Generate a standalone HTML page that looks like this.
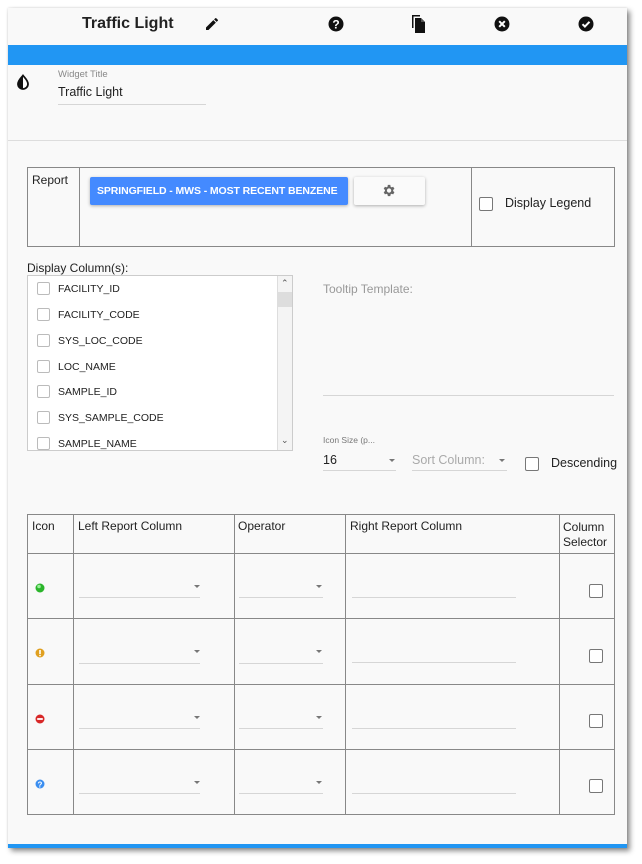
<!DOCTYPE html>
<html><head><meta charset="utf-8"><style>
*{margin:0;padding:0;box-sizing:border-box}
body{width:642px;height:864px;background:#fff;font-family:"Liberation Sans",Arial,sans-serif;position:relative;overflow:hidden;color:#222}
.a{position:absolute}
#panel{left:8px;top:8px;width:619px;height:840px;background:#f9f9f9;box-shadow:3px 3px 5px rgba(0,0,0,.45),0 0 2px rgba(0,0,0,.15)}
.t{position:absolute;white-space:nowrap;line-height:1}
.ul{position:absolute;height:1px;background:#d6d6d6}
.cb{position:absolute;width:14px;height:14px;border:1.5px solid #777;border-radius:2px;background:#fff}
.cbl{position:absolute;width:13px;height:13px;border:1px solid #bbb;border-radius:2px;background:#fff}
.arr{position:absolute;width:0;height:0;border-left:3px solid transparent;border-right:3px solid transparent;border-top:3px solid #777}
.vl{position:absolute;width:1px;background:#888}
.hl{position:absolute;height:1px;background:#888}
</style></head><body>
<div id="panel" class="a"></div>
<div class="t" style="left:82px;top:16px;font-size:16px;font-weight:bold;color:#222">Traffic Light</div>
<svg class="a" style="left:204px;top:16px" width="16" height="16" viewBox="0 0 24 24"><path d="M3 17.25V21h3.75L17.81 9.94l-3.75-3.75L3 17.25zM20.71 7.04a1 1 0 000-1.41l-2.34-2.34a1 1 0 00-1.41 0l-1.83 1.83 3.75 3.75 1.83-1.83z" fill="#111"/></svg>
<svg class="a" style="left:328px;top:16px" width="16" height="16" viewBox="0 0 16 16"><circle cx="8" cy="8" r="7.5" fill="#111"/><text x="8" y="12.3" font-size="12" font-weight="bold" fill="#fff" text-anchor="middle" font-family="Liberation Sans">?</text></svg>
<svg class="a" style="left:411px;top:15px" width="16" height="18" viewBox="0 0 16 18"><path d="M1 0h8v1.5H2.5V13H1z" fill="#111"/><path d="M4 3h6l4 4v11H4z" fill="#111"/><path d="M10 3v4h4" fill="#555"/></svg>
<svg class="a" style="left:494px;top:16px" width="16" height="16" viewBox="0 0 16 16"><circle cx="8" cy="8" r="7.5" fill="#111"/><path d="M5.2 5.2l5.6 5.6M10.8 5.2l-5.6 5.6" stroke="#fff" stroke-width="2"/></svg>
<svg class="a" style="left:578px;top:16px" width="16" height="16" viewBox="0 0 16 16"><circle cx="8" cy="8" r="7.5" fill="#111"/><path d="M4.5 8.2l2.4 2.4 4.6-4.8" stroke="#fff" stroke-width="2" fill="none"/></svg>
<div class="a" style="left:8px;top:45px;width:619px;height:20px;background:#2196f3"></div>
<svg class="a" style="left:16px;top:74px" width="14" height="16" viewBox="0 0 14 16"><path d="M7 1.5C5 4 2 6.5 2 10a5 5 0 0010 0C12 6.5 9 4 7 1.5z" fill="#fff" stroke="#111" stroke-width="1.8"/><path d="M7 1.5C5 4 2 6.5 2 10a5 5 0 005 5z" fill="#111"/></svg>
<div class="t" style="left:58px;top:70px;font-size:9.5px;color:#888">Widget Title</div>
<div class="t" style="left:58px;top:86px;font-size:12.5px;color:#222">Traffic Light</div>
<div class="ul" style="left:58px;top:104px;width:148px"></div>
<div class="a" style="left:8px;top:140px;width:619px;height:1px;background:#ddd"></div>

<div class="a" style="left:27px;top:167px;width:588px;height:80px;border:1px solid #888"></div>
<div class="vl" style="left:79px;top:167px;height:80px"></div>
<div class="vl" style="left:471px;top:167px;height:80px"></div>
<div class="t" style="left:32px;top:174px;font-size:12px">Report</div>
<div class="a" style="left:90px;top:177px;width:258px;height:28px;background:#448aff;border-radius:2px;box-shadow:0 1px 3px rgba(0,0,0,.3)"></div>
<div class="t" style="left:97px;top:186px;font-size:10.5px;font-weight:bold;color:#fff;letter-spacing:-.1px">SPRINGFIELD - MWS - MOST RECENT BENZENE</div>
<div class="a" style="left:354px;top:177px;width:71px;height:28px;background:#fafafa;border-radius:2px;box-shadow:0 1px 3px rgba(0,0,0,.3)"></div>
<svg class="a" style="left:381px;top:183px" width="15" height="15" viewBox="0 0 24 24"><path d="M19.4 13a7.5 7.5 0 000-2l2.1-1.6-2-3.5-2.5 1a7.6 7.6 0 00-1.7-1L14.9 3h-4l-.4 2.9a7.6 7.6 0 00-1.7 1l-2.5-1-2 3.5L6.4 11a7.5 7.5 0 000 2l-2.1 1.6 2 3.5 2.5-1a7.6 7.6 0 001.7 1l.4 2.9h4l.4-2.9a7.6 7.6 0 001.7-1l2.5 1 2-3.5zM12.9 15.5a3.5 3.5 0 110-7 3.5 3.5 0 010 7z" fill="#666"/></svg>
<div class="cb" style="left:479px;top:197px"></div>
<div class="t" style="left:505px;top:197px;font-size:12.5px">Display Legend</div>

<div class="t" style="left:27px;top:262px;font-size:12px">Display Column(s):</div>
<div class="a" style="left:27px;top:275px;width:266px;height:176px;background:#fff;border:1px solid #ccc"></div>
<div class="a" style="left:277px;top:276px;width:15px;height:174px;background:#f4f4f4;border-left:1px solid #ddd"></div>
<div class="a" style="left:278px;top:292px;width:14px;height:15px;background:#ddd"></div>
<div class="t" style="left:281px;top:279px;font-size:9px;color:#555">&#8963;</div>
<div class="t" style="left:281px;top:436px;font-size:9px;color:#555">&#8964;</div>
<div class="cbl" style="left:37px;top:282px"></div><div class="t" style="left:58px;top:284px;font-size:10.5px">FACILITY_ID</div>
<div class="cbl" style="left:37px;top:308px"></div><div class="t" style="left:58px;top:310px;font-size:10.5px">FACILITY_CODE</div>
<div class="cbl" style="left:37px;top:334px"></div><div class="t" style="left:58px;top:336px;font-size:10.5px">SYS_LOC_CODE</div>
<div class="cbl" style="left:37px;top:360px"></div><div class="t" style="left:58px;top:362px;font-size:10.5px">LOC_NAME</div>
<div class="cbl" style="left:37px;top:385px"></div><div class="t" style="left:58px;top:387px;font-size:10.5px">SAMPLE_ID</div>
<div class="cbl" style="left:37px;top:411px"></div><div class="t" style="left:58px;top:413px;font-size:10.5px">SYS_SAMPLE_CODE</div>
<div class="cbl" style="left:37px;top:437px"></div><div class="t" style="left:58px;top:439px;font-size:10.5px">SAMPLE_NAME</div>

<div class="t" style="left:323px;top:283px;font-size:12px;color:#999">Tooltip Template:</div>
<div class="ul" style="left:323px;top:395px;width:291px"></div>
<div class="t" style="left:323px;top:436px;font-size:8.5px;color:#777">Icon Size (p...</div>
<div class="t" style="left:323px;top:454px;font-size:12.5px">16</div>
<div class="arr" style="left:389px;top:459px"></div>
<div class="ul" style="left:323px;top:470px;width:73px"></div>
<div class="t" style="left:412px;top:454px;font-size:12.5px;color:#aaa">Sort Column:</div>
<div class="arr" style="left:499px;top:459px"></div>
<div class="ul" style="left:412px;top:470px;width:95px"></div>
<div class="cb" style="left:525px;top:457px"></div>
<div class="t" style="left:551px;top:457px;font-size:12.5px">Descending</div>

<div class="a" style="left:27px;top:514px;width:588px;height:301px;border:1px solid #888"></div>
<div class="vl" style="left:73px;top:514px;height:301px"></div>
<div class="vl" style="left:234px;top:514px;height:301px"></div>
<div class="vl" style="left:345px;top:514px;height:301px"></div>
<div class="vl" style="left:559px;top:514px;height:301px"></div>
<div class="hl" style="left:27px;top:553px;width:588px"></div>
<div class="hl" style="left:27px;top:618px;width:588px"></div>
<div class="hl" style="left:27px;top:684px;width:588px"></div>
<div class="hl" style="left:27px;top:749px;width:588px"></div>
<div class="t" style="left:32px;top:520px;font-size:12px">Icon</div>
<div class="t" style="left:78px;top:520px;font-size:12px">Left Report Column</div>
<div class="t" style="left:238px;top:520px;font-size:12px">Operator</div>
<div class="t" style="left:350px;top:520px;font-size:12px">Right Report Column</div>
<div class="t" style="left:563px;top:520px;font-size:12px;line-height:15px">Column<br>Selector</div>

<svg class="a" style="left:35px;top:583px" width="10" height="10"><circle cx="5" cy="5" r="4.5" fill="#2bb52b"/><circle cx="4" cy="3.5" r="1.8" fill="#9e9"/></svg>
<svg class="a" style="left:35px;top:648px" width="10" height="10"><circle cx="5" cy="5" r="4.5" fill="#e0a020"/><rect x="4.2" y="2" width="1.6" height="4" fill="#fff"/><rect x="4.2" y="6.8" width="1.6" height="1.4" fill="#fff"/></svg>
<svg class="a" style="left:35px;top:714px" width="10" height="10"><circle cx="5" cy="5" r="4.5" fill="#d82828"/><rect x="2.2" y="4.1" width="5.6" height="1.8" fill="#fff"/></svg>
<svg class="a" style="left:35px;top:779px" width="10" height="10"><circle cx="5" cy="5" r="4.5" fill="#3b8ef0"/><text x="5" y="8.3" font-size="8" font-weight="bold" fill="#fff" text-anchor="middle" font-family="Liberation Sans">?</text></svg>

<div class="ul" style="left:79px;top:597px;width:121px"></div><div class="arr" style="left:194px;top:585px"></div>
<div class="ul" style="left:239px;top:597px;width:84px"></div><div class="arr" style="left:316px;top:585px"></div>
<div class="ul" style="left:352px;top:597px;width:164px"></div><div class="cb" style="left:589px;top:584px"></div>

<div class="ul" style="left:79px;top:663px;width:121px"></div><div class="arr" style="left:194px;top:650px"></div>
<div class="ul" style="left:239px;top:663px;width:84px"></div><div class="arr" style="left:316px;top:650px"></div>
<div class="ul" style="left:352px;top:662px;width:164px"></div><div class="cb" style="left:589px;top:649px"></div>

<div class="ul" style="left:79px;top:728px;width:121px"></div><div class="arr" style="left:194px;top:716px"></div>
<div class="ul" style="left:239px;top:728px;width:84px"></div><div class="arr" style="left:316px;top:716px"></div>
<div class="ul" style="left:352px;top:728px;width:164px"></div><div class="cb" style="left:589px;top:714px"></div>

<div class="ul" style="left:79px;top:793px;width:121px"></div><div class="arr" style="left:194px;top:781px"></div>
<div class="ul" style="left:239px;top:793px;width:84px"></div><div class="arr" style="left:316px;top:781px"></div>
<div class="ul" style="left:352px;top:793px;width:164px"></div><div class="cb" style="left:589px;top:779px"></div>

<div class="a" style="left:8px;top:844px;width:619px;height:4px;background:#2196f3"></div>
</body></html>
